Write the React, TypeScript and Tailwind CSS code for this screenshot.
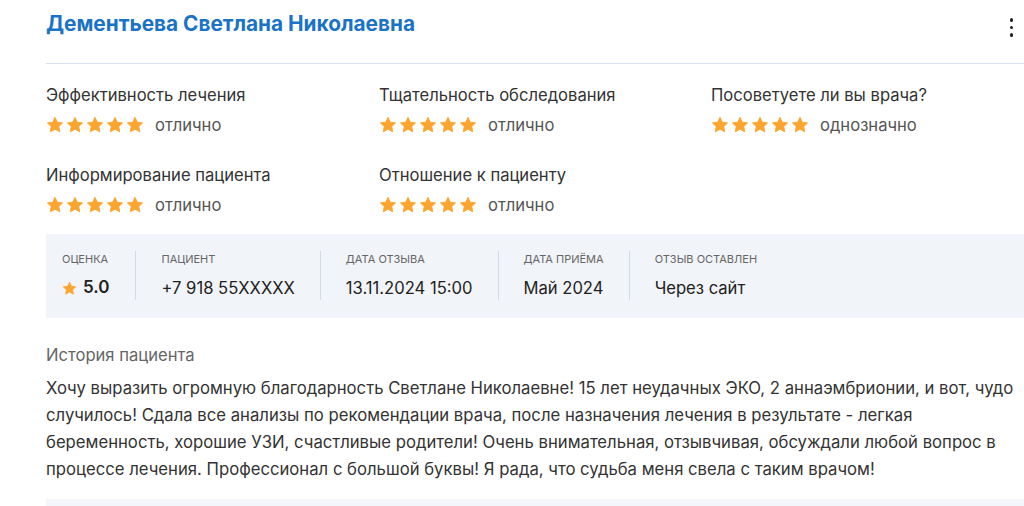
import React from 'react';

const ratings = [
  { label: 'Эффективность лечения', value: 'отлично' },
  { label: 'Тщательность обследования', value: 'отлично' },
  { label: 'Посоветуете ли вы врача?', value: 'однозначно' },
  { label: 'Информирование пациента', value: 'отлично' },
  { label: 'Отношение к пациенту', value: 'отлично' },
];

const facts = [
  { label: 'Пациент', value: '+7 918 55XXXXX' },
  { label: 'Дата отзыва', value: '13.11.2024 15:00' },
  { label: 'Дата приёма', value: 'Май 2024' },
  { label: 'Отзыв оставлен', value: 'Через сайт' },
];

function Star({ className }: { className?: string }) {
  return (
    <svg viewBox="0 0 24 24" className={className} fill="#fba52f">
      <path d="M12 1.8l3.1 6.5 7 .9-5.1 4.9 1.3 7L12 17.7l-6.3 3.4 1.3-7L1.9 9.2l7-.9L12 1.8z" strokeLinejoin="round" stroke="#fba52f" strokeWidth="1.2" />
    </svg>
  );
}

export default function App() {
  return (
    <div className="w-[1024px] h-[506px] overflow-hidden bg-white font-['Inter',sans-serif]">
      <div className="ml-[46px] w-[998px]">
        <div className="flex justify-between items-start h-[64px] border-b border-[#d8e2f0] pt-[10px] pr-[30px]">
          <h2 className="text-[20.8px] leading-7 font-bold text-[#1a73c6]">Дементьева Светлана Николаевна</h2>
          <div className="flex flex-col gap-[4px] pt-[8px] pr-[1px]">
            <span className="block w-[3.5px] h-[3.5px] rounded-full bg-[#222]" />
            <span className="block w-[3.5px] h-[3.5px] rounded-full bg-[#222]" />
            <span className="block w-[3.5px] h-[3.5px] rounded-full bg-[#222]" />
          </div>
        </div>

        <div className="grid grid-cols-[333px_332px_1fr] gap-y-[28px] pt-[19px]">
          {ratings.map((r) => (
            <div key={r.label}>
              <div className="text-[16.6px] leading-6 text-[#333]">{r.label}</div>
              <div className="flex items-center mt-2 h-5">
                <div className="flex gap-[2px]">
                  {[0, 1, 2, 3, 4].map((i) => (
                    <Star key={i} className="w-[18px] h-[18px]" />
                  ))}
                </div>
                <span className="ml-[11px] text-[16.6px] text-[#555]">{r.value}</span>
              </div>
            </div>
          ))}
        </div>

        <div className="mt-[19px] bg-[#f1f4f8] flex pl-4 pt-[17px] pb-[18px]">
          <div className="pr-[26px]">
            <div className="text-[11px] leading-4 uppercase text-[#666]">Оценка</div>
            <div className="mt-[9px] flex items-center h-6">
              <Star className="w-[15px] h-[15px]" />
              <span className="ml-[6px] text-[17px] font-semibold text-[#222]">5.0</span>
            </div>
          </div>
          {facts.map((f) => (
            <div key={f.label} className="border-l border-[#d3dbe6] px-[25px]">
              <div className="text-[11px] leading-4 uppercase text-[#666]">{f.label}</div>
              <div className="mt-[9px] text-[16.6px] leading-6 text-[#222]">{f.value}</div>
            </div>
          ))}
        </div>

        <div className="mt-[26px] text-[16.6px] leading-[22px] text-[#666]">История пациента</div>
        <p className="mt-[9px] whitespace-nowrap text-[16.7px] leading-[27px] text-[#333]">
          Хочу выразить огромную благодарность Светлане Николаевне! 15 лет неудачных ЭКО, 2 аннаэмбрионии, и вот, чудо
          <br />
          случилось! Сдала все анализы по рекомендации врача, после назначения лечения в результате - легкая
          <br />
          беременность, хорошие УЗИ, счастливые родители! Очень внимательная, отзывчивая, обсуждали любой вопрос в
          <br />
          процессе лечения. Профессионал с большой буквы! Я рада, что судьба меня свела с таким врачом!
        </p>

        <div className="mt-[16px] h-[40px] bg-[#f3f6fa]" />
      </div>
    </div>
  );
}
